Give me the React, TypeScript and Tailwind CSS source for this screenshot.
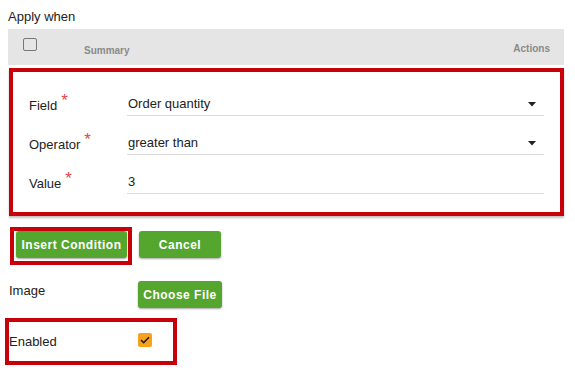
import React from "react";

function Req() {
  return <span className="text-[#e0474c] text-[17px] leading-none relative top-[-5px] ml-[4px]">*</span>;
}

function Caret() {
  return (
    <svg width="8" height="5" viewBox="0 0 8 5" className="mr-[8px]">
      <path d="M0 0 H8 L4 4.5 Z" fill="#222" />
    </svg>
  );
}

function Row({ label, value, caret }: { label: string; value: string; caret?: boolean }) {
  return (
    <div className="flex h-[23px]">
      <div className="w-[98px] flex items-center text-[13px] text-[#222] pt-[2px]">
        {label}
        <Req />
      </div>
      <div className="flex-1 flex items-center justify-between border-b border-[#dcdcdc] pl-[1px] text-[13px] text-[#222]">
        <span>{value}</span>
        {caret && <Caret />}
      </div>
    </div>
  );
}

function GreenBtn({ children, w }: { children: React.ReactNode; w: string }) {
  return (
    <button
      className={`${w} h-[27px] rounded-[3px] bg-[#55a62f] text-white font-bold text-[12px] tracking-[0.5px] shadow-[0_1px_2px_rgba(0,0,0,0.35)] flex items-center justify-center`}
    >
      {children}
    </button>
  );
}

export default function App() {
  return (
    <div
      className="w-[575px] h-[373px] bg-white overflow-hidden pl-[8px] pr-[11px] text-[#222]"
      style={{ fontFamily: '"Liberation Sans", Arial, sans-serif' }}
    >
      <div className="pt-[9px] text-[13px] leading-[16px]">Apply when</div>
      <div className="mt-[4px] h-[36px] bg-[#e5e5e5] flex items-start">
        <div className="ml-[15px] mt-[9px] w-[14px] h-[13px] border border-[#777] rounded-[2px]" />
        <div className="ml-[47px] mt-[14px] text-[10px] font-bold text-[#8a8a8a]">Summary</div>
        <div className="ml-auto mr-[14px] mt-[12px] text-[10px] font-bold text-[#8a8a8a]">Actions</div>
      </div>
      <div className="mt-[3px] ml-[1px] border-4 border-[#c8000a] bg-white shadow-[0_2px_2px_rgba(0,0,0,0.25)] pt-[21px] pb-[18px] pl-[16px] pr-[16px] flex flex-col gap-[16px]">
        <Row label="Field" value="Order quantity" caret />
        <Row label="Operator" value="greater than" caret />
        <Row label="Value" value="3" />
      </div>
      <div className="mt-[11px] flex items-start">
        <div className="ml-[2px] w-[122px] h-[38px] border-4 border-[#c8000a] pl-[2px]">
          <GreenBtn w="w-[111px]">Insert Condition</GreenBtn>
        </div>
        <div className="ml-[7px] mt-[4px]">
          <GreenBtn w="w-[82px]">Cancel</GreenBtn>
        </div>
      </div>
      <div className="mt-[16px] flex items-center h-[27px]">
        <div className="w-[130px] text-[13px] pl-[1px] -mt-[8px]">Image</div>
        <GreenBtn w="w-[84px]">Choose File</GreenBtn>
      </div>
      <div className="mt-[10px] -ml-[3px] w-[172px] h-[47px] border-4 border-[#c8000a] flex items-center">
        <div className="w-[129px] text-[13px]">Enabled</div>
        <div className="w-[14px] h-[14px] rounded-[2px] bg-[#f7a11d] flex items-center justify-center -mt-[3px]">
          <svg width="10" height="8" viewBox="0 0 10 8">
            <path d="M1 4.2 L3.7 6.6 L9 1.2" stroke="#222" strokeWidth="1.6" fill="none" />
          </svg>
        </div>
      </div>
    </div>
  );
}
